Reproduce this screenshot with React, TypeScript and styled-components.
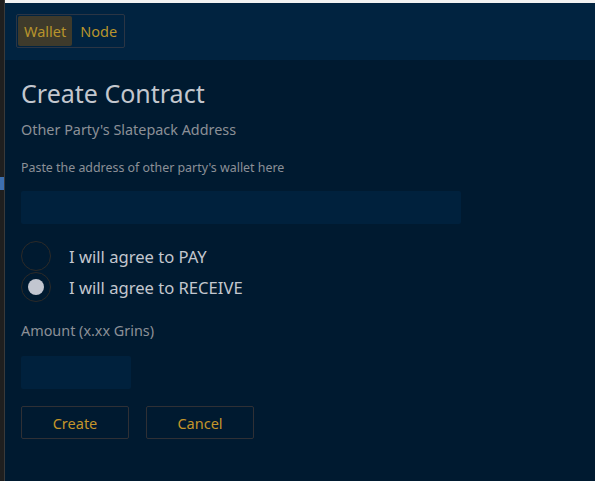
import styled, { createGlobalStyle } from "styled-components";

const GlobalStyle = createGlobalStyle`
  html, body {
    margin: 0;
    padding: 0;
    background: #001a30;
  }
  body {
    font-family: "Noto Sans", "Open Sans", sans-serif;
  }
`;

const Frame = styled.div`
  display: flex;
  flex-flow: row;
  width: 595px;
  height: 481px;
  overflow: hidden;
`;

const Gutter = styled.div`
  width: 4px;
  flex-shrink: 0;
  background: #1f1f1f;
  border-right: 1px solid #3a3a3a;
  display: flex;
  flex-flow: column;
  padding-top: 177px;

  .mark {
    height: 13px;
    background: #3d6fb0;
  }
`;

const Window = styled.div`
  flex: 1;
  display: flex;
  flex-flow: column;
  border-top: 3px solid #f2f2f2;
`;

const Header = styled.div`
  height: 57px;
  background: #012340;
  display: flex;
  align-items: flex-start;
  padding: 11px 0 0 11px;
  box-sizing: border-box;
`;

const Tabs = styled.div`
  display: flex;
  flex-flow: row;
  gap: 2px;
  padding: 1px;
  border: 1px solid #2b3544;
  border-radius: 2px;
`;

const Tab = styled.button<{ $active?: boolean }>`
  border: 0;
  margin: 0;
  height: 30px;
  padding: 0 6px;
  border-radius: 2px;
  background: ${(p) => (p.$active ? "#3e3a2b" : "transparent")};
  color: #b8942c;
  font-family: "Noto Sans", "Open Sans", sans-serif;
  font-size: 14.5px;
  cursor: pointer;
`;

const Body = styled.div`
  flex: 1;
  background: #001a30;
  display: flex;
  flex-flow: column;
  padding: 17px 0 0 16px;
`;

const Title = styled.h1`
  margin: 0;
  font-weight: 400;
  font-size: 25px;
  line-height: 32px;
  color: #c3c7ce;
`;

const Label = styled.div<{ $small?: boolean }>`
  color: #8c9097;
  font-size: ${(p) => (p.$small ? "12.4px" : "14.4px")};
  line-height: 18px;
`;

const Input = styled.input<{ $width: number }>`
  width: ${(p) => p.$width}px;
  height: 33px;
  box-sizing: border-box;
  border: 0;
  border-radius: 2px;
  background: #00213d;
  color: #c3c7ce;
  padding: 0 8px;
  &:focus {
    outline: none;
  }
`;

const RadioGroup = styled.div`
  display: flex;
  flex-flow: column;
  gap: 1px;
`;

const RadioRow = styled.label`
  display: flex;
  align-items: center;
  gap: 18px;
  color: #c3c7ce;
  font-size: 16.6px;
  height: 30px;
  cursor: pointer;
`;

const Circle = styled.span<{ $checked?: boolean }>`
  width: 28px;
  height: 28px;
  border-radius: 50%;
  border: 1px solid #2c2a28;
  display: flex;
  align-items: center;
  justify-content: center;

  &::after {
    content: "";
    width: 16px;
    height: 16px;
    border-radius: 50%;
    background: #c2c6d0;
    display: ${(p) => (p.$checked ? "block" : "none")};
  }
`;

const Buttons = styled.div`
  display: flex;
  flex-flow: row;
  gap: 17px;
`;

const Button = styled.button`
  width: 108px;
  height: 33px;
  background: transparent;
  border: 1px solid #2f3035;
  border-radius: 2px;
  color: #c4952a;
  font-family: "Noto Sans", "Open Sans", sans-serif;
  font-size: 14.5px;
  cursor: pointer;
`;

const Spacer = styled.div<{ $h: number }>`
  height: ${(p) => p.$h}px;
  flex-shrink: 0;
`;

export default function App() {
  return (
    <>
      <GlobalStyle />
      <Frame>
        <Gutter>
          <div className="mark" />
        </Gutter>
        <Window>
          <Header>
            <Tabs>
              <Tab $active>Wallet</Tab>
              <Tab>Node</Tab>
            </Tabs>
          </Header>
          <Body>
            <Title>Create Contract</Title>
            <Spacer $h={12} />
            <Label>Other Party's Slatepack Address</Label>
            <Spacer $h={20} />
            <Label $small>Paste the address of other party's wallet here</Label>
            <Spacer $h={14} />
            <Input $width={440} />
            <Spacer $h={17} />
            <RadioGroup>
              <RadioRow>
                <Circle />
                I will agree to PAY
              </RadioRow>
              <RadioRow>
                <Circle $checked />
                I will agree to RECEIVE
              </RadioRow>
            </RadioGroup>
            <Spacer $h={20} />
            <Label>Amount (x.xx Grins)</Label>
            <Spacer $h={16} />
            <Input $width={110} />
            <Spacer $h={17} />
            <Buttons>
              <Button>Create</Button>
              <Button>Cancel</Button>
            </Buttons>
          </Body>
        </Window>
      </Frame>
    </>
  );
}
